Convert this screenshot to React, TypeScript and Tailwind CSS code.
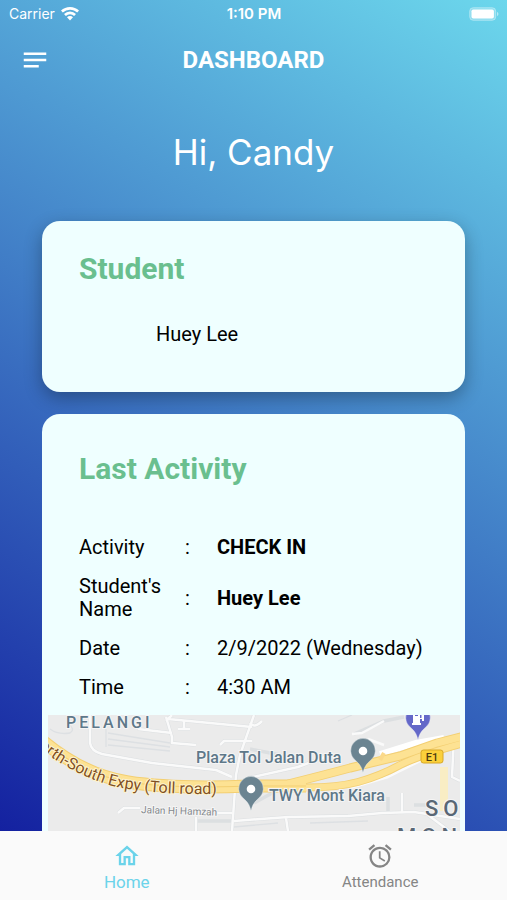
import clsx from "clsx";
import React, { useState } from "react";
import { MdAlarm, MdNotes, MdOutlineHome } from "react-icons/md";

const activity = [
  { label: "Activity", value: "CHECK IN", bold: true },
  { label: "Student's Name", value: "Huey Lee", bold: true },
  { label: "Date", value: "2/9/2022 (Wednesday)", bold: false },
  { label: "Time", value: "4:30 AM", bold: false },
];

const tabs = [
  { name: "Home", icon: MdOutlineHome },
  { name: "Attendance", icon: MdAlarm },
];

const StatusBar = () => {
  return (
    <div className="grid grid-cols-3 items-center h-7 pl-[9px] pr-2 text-white font-['Inter',sans-serif] text-sm leading-5">
      <div className="flex items-center gap-1.5">
        <span>Carrier</span>
        <svg viewBox="0 0 18 14" className="w-[18px] h-3.5" fill="currentColor">
          <path d="M9 0C5.6 0 2.4 1.3 0 3.6l1.8 2A10.3 10.3 0 0 1 9 2.7c2.8 0 5.3 1.1 7.2 2.9l1.8-2A13 13 0 0 0 9 0z" />
          <path d="M9 4.5A8.6 8.6 0 0 0 3 7l1.9 2A6 6 0 0 1 9 7.2 6 6 0 0 1 13.1 9L15 7a8.6 8.6 0 0 0-6-2.5z" />
          <path d="M9 9a4.5 4.5 0 0 0-3 1.2L9 13.6l3-3.4A4.5 4.5 0 0 0 9 9z" />
        </svg>
      </div>
      <span className="text-center font-semibold text-[15px]">1:10 PM</span>
      <svg viewBox="0 0 30 14" className="w-[30px] h-3.5 justify-self-end">
        <rect
          x="0.7"
          y="0.7"
          width="26"
          height="12.6"
          rx="3.5"
          fill="white"
          fillOpacity="0.25"
          stroke="white"
          strokeOpacity="0.35"
        />
        <rect x="2.5" y="2.5" width="22.4" height="9" rx="1.8" fill="white" />
        <path d="M28 5v4c.9-.4 1.4-1.1 1.4-2S28.900 5.4 28 5z" fill="white" fillOpacity="0.5" />
      </svg>
    </div>
  );
};

const Pin = ({ x, y, color, children }: {
  x: number;
  y: number;
  color: string;
  children?: React.ReactNode;
}) => {
  return (
    <g transform={`translate(${x} ${y})`}>
      <path
        d="M0 22C-1.500 15-4 12.500-8 9A12.300 12.300 0 1 1 8 9C4 12.500 1.500 15 0 22z"
        fill={color}
        stroke="white"
        strokeOpacity="0.6"
        strokeWidth="0.6"
      />
      {children ?? <circle r="4.3" fill="white" />}
    </g>
  );
};

const ActivityMap = () => {
  return (
    <svg
      viewBox="0 0 412 180"
      preserveAspectRatio="xMidYMin slice"
      className="block w-full h-[180px] bg-[#ebebeb] font-['Roboto',sans-serif]"
      role="img"
      aria-label="Map of the last activity"
    >
      <g fill="none" stroke="#dcdfe1" strokeWidth="3.5">
        <path d="M42 0V28Q43 36 54 39L104 48 168 55 184 62" />
        <path d="M118 2 124 22 124 28 148 30 M120 4 204 12M90 14 124 18M124 0 118 6" />
        <path d="M206 0 192 40 188 60 184 116" />
        <path d="M172 30 176 26 204 26M136 6V14M130 14H142" />
        <path d="M70 98 76 93H92M168 98H184M148 102V116M148 106H184" />
        <path d="M200 63 250 52 282 40" />
        <path d="M202 8Q206 14 214 6M202 34 232 40M306 19 336 6 356 2" />
        <path d="M186 106 240 102 300 101 334 98 366 97 412 104M238 103 242 130" />
        <path d="M354 78V97M340 97V82M366 90H380M206 88 228 76" />
        <path d="M406 20 404 62 412 66M380 100 412 124" />
      </g>
      <g fill="none" stroke="#dde0e3" strokeWidth="1.3">
        <path d="M60 18 122 28M60 24 122 32M60 30 122 36M58 14V32" />
        <path d="M2 14Q10 20 22 18 28 14 20 9" />
        <path d="M290 6 304 0M262 108 320 106M186 112 230 108" />
      </g>
      <g fill="none" stroke="#fafafa" strokeWidth="2.5" strokeLinejoin="round">
        <path d="M42 0V28Q43 36 54 39L104 48 168 55 184 62" />
        <path d="M118 2 124 22 124 28 148 30M120 4 204 12M90 14 124 18M124 0 118 6" />
        <path d="M206 0 192 40 188 60 184 116" />
        <path d="M172 30 176 26 204 26M136 6V14M130 14H142" />
        <path d="M70 98 76 93H92M168 98H184M148 102V116" />
        <path d="M200 63 250 52 282 40" />
        <path d="M202 8Q206 14 214 6M304 19 314 18 336 6M320 24 336 30" />
        <path d="M186 106 240 102 300 101 334 98 366 97 412 104M238 103 242 130" />
        <path d="M354 78V97M302 73 340 62 376 44" />
        <path d="M406 20 404 62 412 66M380 100 412 124" />
      </g>
      <path d="M332 39 368 28 396 23" fill="none" stroke="#fff" strokeWidth="6" />
      <path d="M392 52H400V96H392z" fill="#f9edc4" />

      <g fill="none" strokeLinejoin="round">
        <g stroke="#f3cf72">
          <path d="M-4 27Q36 60 80 67T202 71H258" strokeWidth="13" />
          <path d="M240 69Q276 60 302 53L352 41 389 28 416 21" strokeWidth="9" />
          <path d="M240 72Q284 74 310 67 332 61 352 50 372 40 416 28" strokeWidth="8" />
        </g>
        <g stroke="#fde293">
          <path d="M-4 27Q36 60 80 67T202 71H258" strokeWidth="11" />
          <path d="M240 69Q276 60 302 53L352 41 389 28 416 21" strokeWidth="7" />
          <path d="M240 72Q284 74 310 67 332 61 352 50 372 40 416 28" strokeWidth="6" />
        </g>
        <path d="M-4 27Q36 60 80 67T202 71H258" stroke="#f3cf72" strokeWidth="1" />
        <path d="M332 45 336 38" stroke="#fbd98a" strokeWidth="4" />
      </g>

      <path id="expressway" d="M-18 24Q12 54 58 69 94 80 169 79" fill="none" />
      <text
        fontSize="16"
        fill="#81501f"
        stroke="#fdf3d0"
        strokeWidth="2"
        paintOrder="stroke"
        textAnchor="end"
      >
        <textPath href="#expressway" startOffset="100%">
          North-South Expy (Toll road)
        </textPath>
      </text>

      <g stroke="#f5f5f5" strokeWidth="2" paintOrder="stroke" fill="#5e7889">
        <text x="18" y="13" fontSize="16" fontWeight="500" className="tracking-[3px]">
          PELANGI
        </text>
        <text x="148" y="48" fontSize="16" fontWeight="500">
          Plaza Tol Jalan Duta
        </text>
        <text x="221" y="86" fontSize="16" fontWeight="500">
          TWY Mont Kiara
        </text>
        <text x="93" y="98" fontSize="10" fill="#85898d" transform="rotate(2 93 98)">
          Jalan Hj Hamzah
        </text>
        <g fontSize="22" fontWeight="500" fill="#596775">
          <text x="377" y="101" className="tracking-[5px]">
            SOLARIS
          </text>
          <text x="349" y="129" className="tracking-[5px]">
            MONT KIARA
          </text>
        </g>
      </g>

      <Pin x={315} y={36} color="#6b8491" />
      <Pin x={203} y={74} color="#6b8491" />
      <Pin x={370} y={3} color="#6468c8">
        <path
          d="M-5-7H2V0H3.500V-4L2-6 3-7 6-4V3H4V1H2V5H3V7H-6V5H-5zM-3-5V-2H0V-5z"
          fill="white"
          fillRule="evenodd"
        />
      </Pin>

      <rect x="373" y="35" width="22" height="13" rx="2.5" fill="#fbd03b" stroke="#d8a826" />
      <text x="384" y="46" fontSize="11" fontWeight="500" fill="#4a3a10" textAnchor="middle">
        E1
      </text>
    </svg>
  );
};

const App = () => {
  const [active, setActive] = useState("Home");

  return (
    <div className="flex flex-col h-screen font-['Roboto',sans-serif] text-black">
      <div className="flex flex-col flex-1 min-h-0 bg-[linear-gradient(211deg,#6cd7ec,#1421a0)]">
        <StatusBar />

        <header className="grid grid-cols-[32px_1fr_32px] items-center h-16 px-5 text-white">
          <button type="button" aria-label="Open menu">
            <MdNotes className="w-[30px] h-[30px]" />
          </button>
          <h1 className="text-center text-2xl font-bold">DASHBOARD</h1>
        </header>

        <main className="flex-1 min-h-0 overflow-y-auto [scrollbar-width:none] px-[42px]">
          <h2 className="pt-10 text-center font-['Inter',sans-serif] text-[35px] leading-10 text-white">
            Hi, Candy
          </h2>

          <section className="mt-[49px] px-[37px] pt-[30px] pb-[46px] rounded-[18px] bg-[#efffff] shadow-[0_6px_18px_rgba(0,0,0,0.3)]">
            <h3 className="text-3xl font-bold text-[#6abf8f]">Student</h3>
            <p className="mt-[35px] pl-[77px] text-xl leading-6">Huey Lee</p>
          </section>

          <section className="mt-[22px] mb-6 pt-[37px] pb-6 rounded-[18px] bg-[#efffff]">
            <h3 className="px-[37px] text-3xl font-bold text-[#6abf8f]">
              Last Activity
            </h3>
            <table className="mt-[41px] ml-[37px] text-xl leading-[23px]">
              <tbody>
                {activity.map((row) => (
                  <tr key={row.label}>
                    <th scope="row" className="w-[106px] py-2 pr-5 text-left font-normal">
                      {row.label}
                    </th>
                    <td className="w-8 py-2">:</td>
                    <td className={clsx("py-2", row.bold && "font-bold")}>
                      {row.value}
                    </td>
                  </tr>
                ))}
              </tbody>
            </table>
            <div className="mt-2 pl-1.5 pr-[5px]">
              <ActivityMap />
            </div>
          </section>
        </main>
      </div>

      <nav className="grid grid-cols-2 h-[69px] bg-[#fafafa]">
        {tabs.map(({ name, icon: Icon }) => (
          <button
            key={name}
            type="button"
            onClick={() => setActive(name)}
            className={clsx(
              "flex flex-col items-center pt-[11px]",
              active === name ? "text-[#6bd3ea] text-[17px]" : "text-[#858585] text-[15px]"
            )}
          >
            <Icon className="w-7 h-7" />
            <span className="leading-6">{name}</span>
          </button>
        ))}
      </nav>
    </div>
  );
};

export default App;
